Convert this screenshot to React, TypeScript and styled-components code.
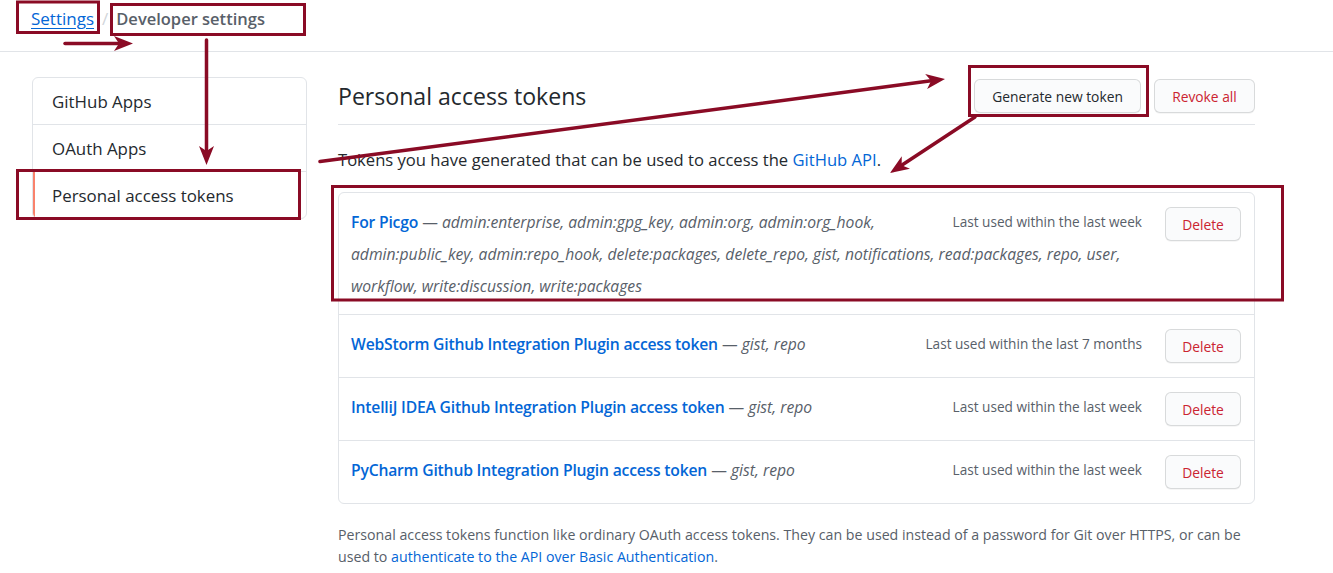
import React from 'react';
import styled, { createGlobalStyle, css } from 'styled-components';

const FONT = '"Open Sans", "Noto Sans", "Liberation Sans", Arial, sans-serif';
const ANN = '#8a0b25';

const GlobalStyle = createGlobalStyle`
  html, body { margin: 0; padding: 0; background: #ffffff; }
  body { font-family: ${FONT}; color: #24292e; }
  * { box-sizing: border-box; }
  a { text-decoration: none; }
`;

const Page = styled.div`
  position: relative;
  width: 1333px;
  height: 573px;
  overflow: hidden;
`;

const Header = styled.header`
  height: 52px;
  border-bottom: 1px solid #e1e4e8;
  padding: 5px 0 0 31px;
  display: flex;
  align-items: flex-start;
  gap: 8px;
  font-size: 17px;
  line-height: 28px;
`;

const CrumbLink = styled.a`
  color: #0366d6;
  text-decoration: underline;
  text-underline-offset: 3px;
`;

const CrumbSep = styled.span`
  color: #d1d5da;
`;

const CrumbCurrent = styled.span`
  color: #586069;
  font-weight: 600;
  font-size: 16.5px;
`;

const Layout = styled.div`
  display: flex;
  align-items: flex-start;
  gap: 31px;
  padding: 25px 0 0 32px;
`;

const Sidebar = styled.nav`
  width: 275px;
  border: 1px solid #e1e4e8;
  border-radius: 6px;
  overflow: hidden;
`;

const SideItem = styled.a<{ $active?: boolean }>`
  display: block;
  position: relative;
  padding: 12px 19px 10px;
  line-height: 24px;
  font-size: 16.9px;
  color: #24292e;
  border-bottom: 1px solid #e1e4e8;
  &:last-child { border-bottom: 0; }
  ${p => p.$active && css`
    &::before {
      content: '';
      position: absolute;
      left: 0;
      top: 0;
      bottom: 0;
      width: 2px;
      background: #f9826c;
    }
  `}
`;

const Main = styled.main`
  width: 917px;
`;

const Subhead = styled.div`
  display: flex;
  align-items: center;
  padding: 2px 0 11px;
  border-bottom: 1px solid #e1e4e8;
`;

const Title = styled.h2`
  flex: 1;
  margin: 0;
  font-size: 23.1px;
  font-weight: 400;
  line-height: 34px;
`;

const Actions = styled.div`
  display: flex;
  gap: 13px;
`;

const Button = styled.button<{ $danger?: boolean; $w: number }>`
  width: ${p => p.$w}px;
  height: 34px;
  padding: 0;
  font-family: ${FONT};
  font-size: 13.8px;
  font-weight: 500;
  color: ${p => (p.$danger ? '#cb2431' : '#24292e')};
  background: #fafbfc;
  border: 1px solid rgba(27, 31, 35, 0.15);
  border-radius: 6px;
  box-shadow: 0 1px 0 rgba(27, 31, 35, 0.04);
`;

const Intro = styled.p`
  margin: 23px 0 20px;
  font-size: 16.6px;
  line-height: 24px;
`;

const Link = styled.a`
  color: #0366d6;
`;

const TokenList = styled.div`
  border: 1px solid #e1e4e8;
  border-radius: 6px;
`;

const TokenRow = styled.div`
  display: flow-root;
  padding: 13px 13px 12px 12px;
  font-size: 15.7px;
  line-height: 32px;
  border-top: 1px solid #e1e4e8;
  &:first-child { border-top: 0; }
`;

const DeleteButton = styled(Button)`
  float: right;
  margin: 1px 0 2px 23px;
`;

const LastUsed = styled.span`
  float: right;
  font-size: 13.6px;
  color: #586069;
`;

const TokenName = styled.a`
  color: #0366d6;
  font-weight: 600;
  letter-spacing: -0.2px;
`;

const Dash = styled.span`
  color: #586069;
`;

const Scopes = styled.em`
  color: #586069;
`;

const Note = styled.p`
  margin: 20px 0 0;
  font-size: 14.2px;
  line-height: 22px;
  color: #586069;
`;

const Overlay = styled.svg`
  position: absolute;
  left: 0;
  top: 0;
  pointer-events: none;
`;

type ArrowProps = { x1: number; y1: number; x2: number; y2: number };

function Arrow({ x1, y1, x2, y2 }: ArrowProps) {
  const dx = x2 - x1;
  const dy = y2 - y1;
  const L = Math.hypot(dx, dy);
  const ux = dx / L;
  const uy = dy / L;
  const px = -uy;
  const py = ux;
  const len = 19;
  const half = 7.5;
  const notch = 5;
  const bx = x2 - ux * len;
  const by = y2 - uy * len;
  const nx = x2 - ux * (len - notch);
  const ny = y2 - uy * (len - notch);
  const pts = `${x2},${y2} ${bx + px * half},${by + py * half} ${nx},${ny} ${bx - px * half},${by - py * half}`;
  return (
    <g>
      <line x1={x1} y1={y1} x2={nx} y2={ny} stroke={ANN} strokeWidth={3.5} strokeLinecap="round" />
      <polygon points={pts} fill={ANN} />
    </g>
  );
}

const tokens = [
  {
    name: 'For Picgo',
    scopes:
      'admin:enterprise, admin:gpg_key, admin:org, admin:org_hook, admin:public_key, admin:repo_hook, delete:packages, delete_repo, gist, notifications, read:packages, repo, user, workflow, write:discussion, write:packages',
    used: 'Last used within the last week',
  },
  { name: 'WebStorm Github Integration Plugin access token', scopes: 'gist, repo', used: 'Last used within the last 7 months' },
  { name: 'IntelliJ IDEA Github Integration Plugin access token', scopes: 'gist, repo', used: 'Last used within the last week' },
  { name: 'PyCharm Github Integration Plugin access token', scopes: 'gist, repo', used: 'Last used within the last week' },
];

export default function App() {
  return (
    <Page>
      <GlobalStyle />
      <Header>
        <CrumbLink href="#">Settings</CrumbLink>
        <CrumbSep>/</CrumbSep>
        <CrumbCurrent>Developer settings</CrumbCurrent>
      </Header>
      <Layout>
        <Sidebar>
          <SideItem href="#">GitHub Apps</SideItem>
          <SideItem href="#">OAuth Apps</SideItem>
          <SideItem href="#" $active>Personal access tokens</SideItem>
        </Sidebar>
        <Main>
          <Subhead>
            <Title>Personal access tokens</Title>
            <Actions>
              <Button $w={167}>Generate new token</Button>
              <Button $w={101} $danger>Revoke all</Button>
            </Actions>
          </Subhead>
          <Intro>
            Tokens you have generated that can be used to access the <Link href="#">GitHub API</Link>.
          </Intro>
          <TokenList>
            {tokens.map(t => (
              <TokenRow key={t.name}>
                <DeleteButton $w={76} $danger>Delete</DeleteButton>
                <LastUsed>{t.used}</LastUsed>
                <TokenName href="#">{t.name}</TokenName> <Dash>—</Dash> <Scopes>{t.scopes}</Scopes>
              </TokenRow>
            ))}
          </TokenList>
          <Note>
            Personal access tokens function like ordinary OAuth access tokens. They can be used instead of a password for Git over HTTPS, or can be
            <br />
            used to <Link href="#">authenticate to the API over Basic Authentication</Link>.
          </Note>
        </Main>
      </Layout>
      <Overlay width={1333} height={573} viewBox="0 0 1333 573">
        <g fill="none" stroke={ANN} strokeWidth={3}>
          <rect x={17.5} y={2} width={81} height={30.5} />
          <rect x={111.5} y={4.5} width={193} height={30} />
          <rect x={17.5} y={170.5} width={282} height={48} />
          <rect x={969.5} y={66.5} width={178} height={49} />
          <rect x={332.5} y={186.5} width={950} height={113.5} />
        </g>
        <Arrow x1={65} y1={43.5} x2={133} y2={43.5} />
        <Arrow x1={206.5} y1={40} x2={206.5} y2={165} />
        <Arrow x1={320} y1={161.5} x2={945} y2={79} />
        <Arrow x1={975} y1={117} x2={890} y2={173} />
      </Overlay>
    </Page>
  );
}
